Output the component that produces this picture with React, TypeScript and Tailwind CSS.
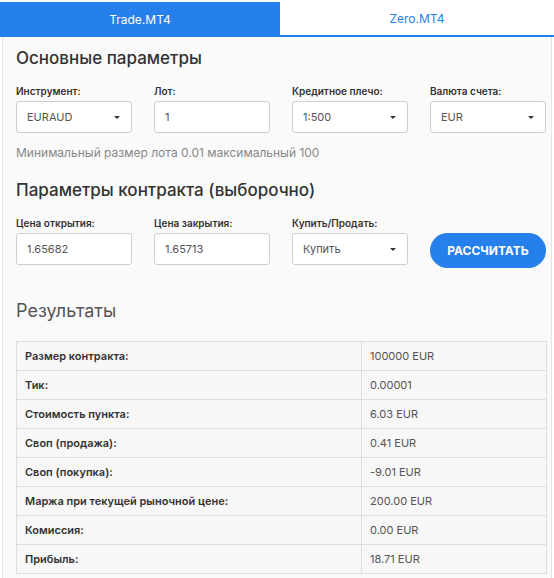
import { useState } from "react"

const rows: [string, string][] = [
  ["Размер контракта:", "100000 EUR"],
  ["Тик:", "0.00001"],
  ["Стоимость пункта:", "6.03 EUR"],
  ["Своп (продажа):", "0.41 EUR"],
  ["Своп (покупка):", "-9.01 EUR"],
  ["Маржа при текущей рыночной цене:", "200.00 EUR"],
  ["Комиссия:", "0.00 EUR"],
  ["Прибыль:", "18.71 EUR"],
]

function Caret() {
  return (
    <svg width="6" height="3" viewBox="0 0 6 3" className="shrink-0">
      <path d="M0 0h6L3 3z" fill="#333" />
    </svg>
  )
}

function Field({ label, value, select }: { label: string; value: string; select?: boolean }) {
  return (
    <div className="flex w-[116px] flex-col">
      <span className="mb-[3px] h-[14px] text-[10px] font-semibold leading-[14px] text-[#333]">{label}</span>
      <div className="flex h-[32px] items-center justify-between rounded-[3px] border border-[#cfcfcf] bg-white pl-[10px] pr-[11px] text-[11px] text-[#555]">
        <span>{value}</span>
        {select && <Caret />}
      </div>
    </div>
  )
}

export default function App() {
  const [tab, setTab] = useState(0)
  return (
    <div className="h-[578px] w-[554px] overflow-hidden bg-white font-['Inter',sans-serif]">
      <div className="flex h-[37px] pt-[2px]">
        {["Trade.MT4", "Zero.MT4"].map((t, i) => (
          <button
            key={t}
            onClick={() => setTab(i)}
            className={
              i === tab
                ? "h-[35px] w-[280px] bg-[#2680eb] text-[12px] text-white"
                : "h-[35px] flex-1 border-b-2 border-[#2680eb] bg-white text-[12px] text-[#2680eb]"
            }
          >
            {t}
          </button>
        ))}
      </div>
      <div className="ml-[2px] mr-[2px] h-[541px] border-x border-[#e3e3e3] bg-[#fafafa] pl-[13px] pr-[5px]">
        <h2 className="pt-[10px] text-[17px] font-medium leading-[22px] text-[#333]">Основные параметры</h2>
        <div className="mt-[15px] flex gap-[22px]">
          <Field label="Инструмент:" value="EURAUD" select />
          <Field label="Лот:" value="1" />
          <Field label="Кредитное плечо:" value="1:500" select />
          <Field label="Валюта счета:" value="EUR" select />
        </div>
        <p className="mt-[12px] text-[12px] leading-[16px] text-[#888]">
          Минимальный размер лота 0.01 максимальный 100
        </p>
        <h2 className="mt-[18px] text-[17px] font-medium leading-[22px] text-[#333]">
          Параметры контракта (выборочно)
        </h2>
        <div className="mt-[15px] flex items-end gap-[22px]">
          <Field label="Цена открытия:" value="1.65682" />
          <Field label="Цена закрытия:" value="1.65713" />
          <Field label="Купить/Продать:" value="Купить" select />
          <button className="mb-[-3px] h-[35px] w-[116px] rounded-full bg-[#2680eb] text-[12px] font-bold text-white">
            РАССЧИТАТЬ
          </button>
        </div>
        <h2 className="mt-[35px] text-[18px] leading-[22px] text-[#555]">Результаты</h2>
        <table className="mt-[19px] w-[531px] border-collapse bg-[#f7f7f7] text-[11px] text-[#333]">
          <tbody>
            {rows.map(([k, v]) => (
              <tr key={k} className="h-[29px]">
                <td className="w-[345px] border border-[#dedede] pl-[8px] font-semibold">{k}</td>
                <td className="border border-[#dedede] pl-[8px] text-[#555]">{v}</td>
              </tr>
            ))}
          </tbody>
        </table>
      </div>
    </div>
  )
}
